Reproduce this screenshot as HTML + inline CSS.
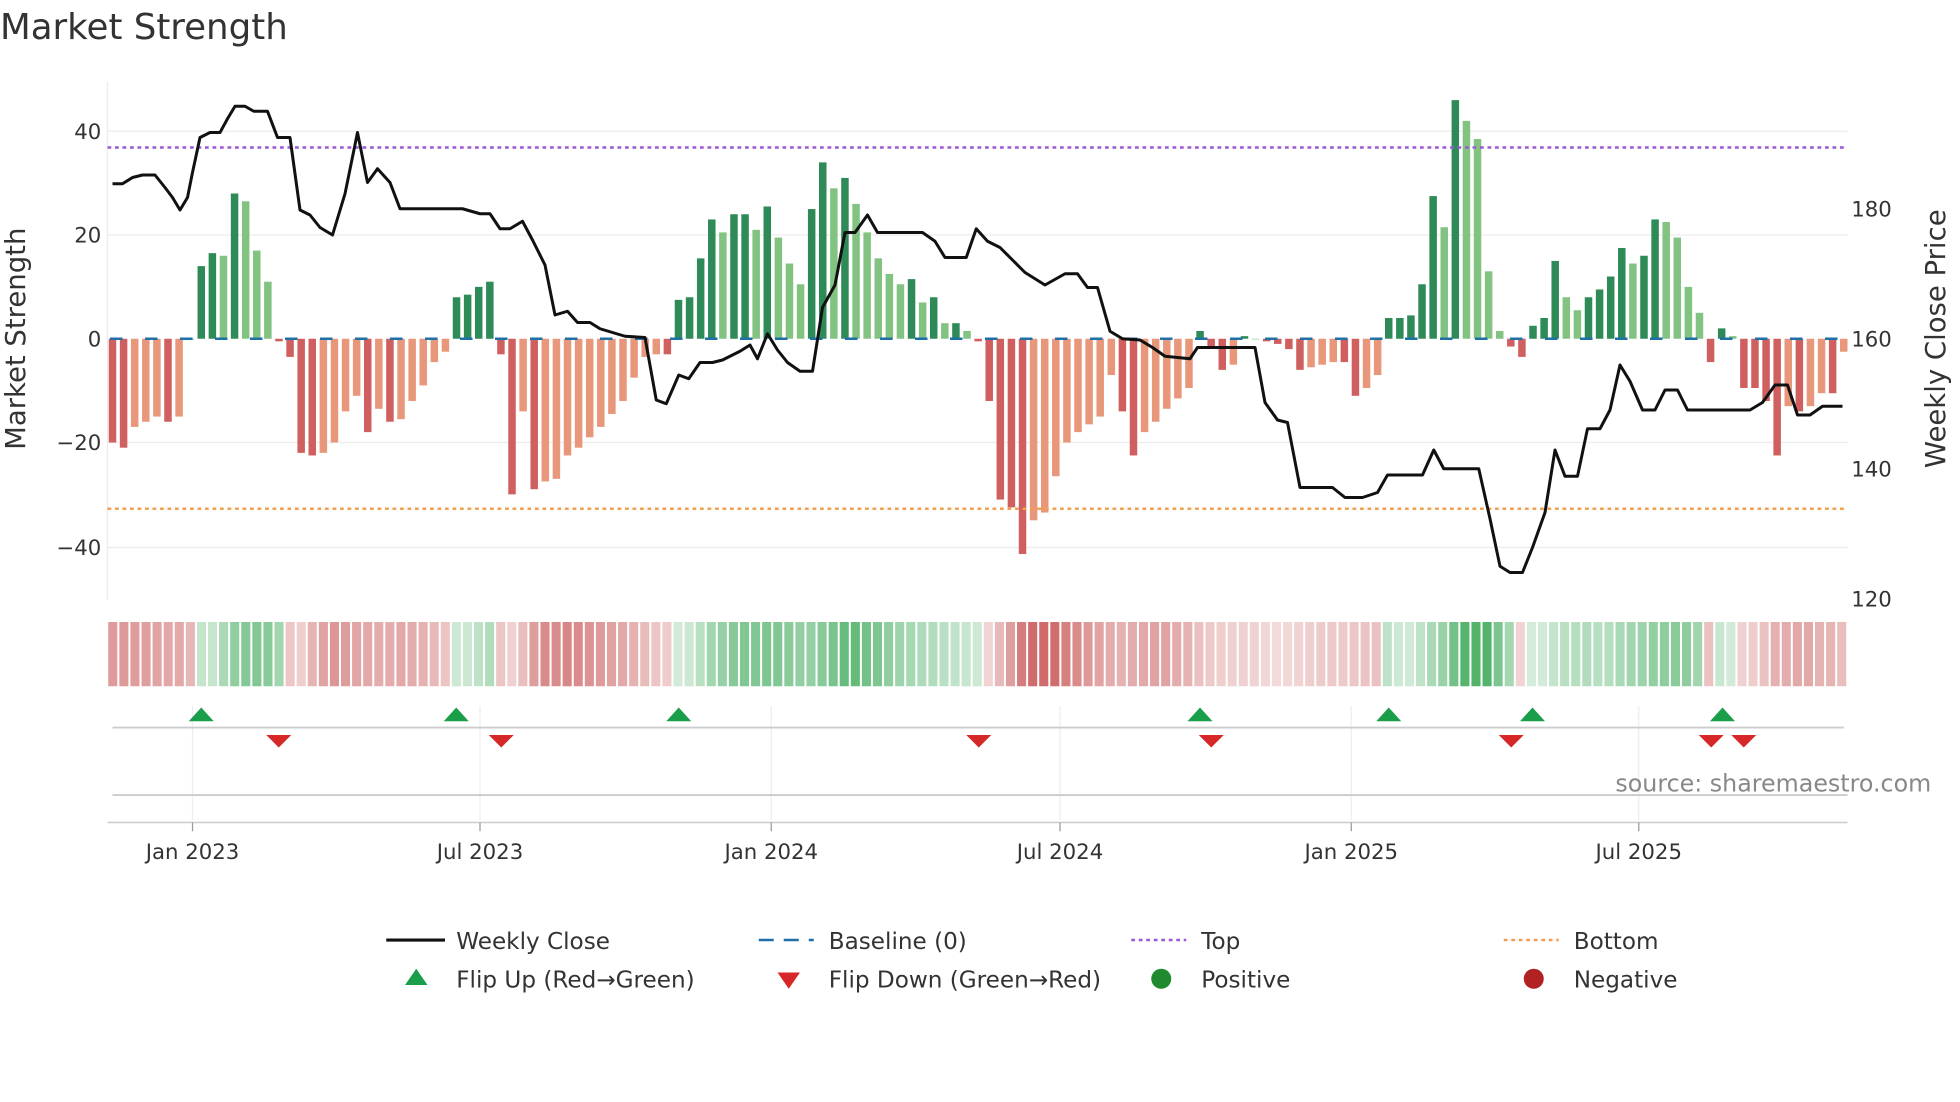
<!DOCTYPE html>
<html><head><meta charset="utf-8"><style>
html,body{margin:0;padding:0;background:#fff;}
svg{display:block;font-family:"DejaVu Sans","Liberation Sans",sans-serif;}
</style></head><body>
<svg id="s" width="1960" height="1102" viewBox="0 0 1568 881.6" xmlns="http://www.w3.org/2000/svg">
<rect width="1568" height="882" fill="#fff"/>
<text x="0" y="31" font-size="28.5" fill="#333">Market Strength</text>
<g id="grid" stroke="#ececec" stroke-width="1">
<line x1="86" x2="1478" y1="105" y2="105"/><line x1="86" x2="1478" y1="188" y2="188"/>
<line x1="86" x2="1478" y1="354" y2="354"/><line x1="86" x2="1478" y1="438" y2="438"/>
<line x1="86" x2="86" y1="65" y2="480"/>
</g>
<g font-size="17" fill="#333" text-anchor="end">
<text x="81" y="111">40</text><text x="81" y="194">20</text><text x="81" y="277">0</text>
<text x="81" y="360">−20</text><text x="81" y="444">−40</text>
</g>
<g font-size="17" fill="#333">
<text x="1481" y="173">180</text><text x="1481" y="277">160</text><text x="1481" y="381">140</text><text x="1481" y="485">120</text>
</g>
<text transform="translate(20,271) rotate(-90)" font-size="22" fill="#333" text-anchor="middle">Market Strength</text>
<text transform="translate(1556,271) rotate(-90)" font-size="22" fill="#333" text-anchor="middle">Weekly Close Price</text>
<g id="bars"></g>
<line x1="86" x2="1478" y1="118" y2="118" stroke="#9b59d6" stroke-width="2" stroke-dasharray="3,3"/>
<line x1="86" x2="1478" y1="407" y2="407" stroke="#f0a050" stroke-width="2" stroke-dasharray="3,3"/>
<line x1="88" x2="1478" y1="271" y2="271" stroke="#1f6fa8" stroke-width="2" stroke-dasharray="10,18"/>
<polyline id="price" fill="none" stroke="#111" stroke-width="2.4" stroke-linejoin="round"/>
<g id="strip"></g>
<g stroke="#eee" stroke-width="1">
<line x1="154" x2="154" y1="565" y2="656"/><line x1="384" x2="384" y1="565" y2="656"/>
<line x1="617" x2="617" y1="565" y2="656"/><line x1="848" x2="848" y1="565" y2="656"/>
<line x1="1081" x2="1081" y1="565" y2="656"/><line x1="1311" x2="1311" y1="565" y2="656"/>
</g>
<line x1="90" x2="1475" y1="582" y2="582" stroke="#ccc" stroke-width="1.5"/>
<line x1="90" x2="1478" y1="636" y2="636" stroke="#ccc" stroke-width="1.5"/>
<g id="marks"></g>
<line x1="86" x2="1478" y1="658" y2="658" stroke="#ccc" stroke-width="1.2"/>
<g stroke="#999" stroke-width="1">
<line x1="154" x2="154" y1="658" y2="665"/><line x1="384" x2="384" y1="658" y2="665"/>
<line x1="617" x2="617" y1="658" y2="665"/><line x1="848" x2="848" y1="658" y2="665"/>
<line x1="1081" x2="1081" y1="658" y2="665"/><line x1="1311" x2="1311" y1="658" y2="665"/>
</g>
<g font-size="17" fill="#333" text-anchor="middle">
<text x="154" y="687">Jan 2023</text><text x="384" y="687">Jul 2023</text><text x="617" y="687">Jan 2024</text>
<text x="848" y="687">Jul 2024</text><text x="1081" y="687">Jan 2025</text><text x="1311" y="687">Jul 2025</text>
</g>
<text x="1545" y="633" font-size="19" fill="#888" text-anchor="end">source: sharemaestro.com</text>
<g font-size="18.5" fill="#333">
<line x1="309" x2="356" y1="752" y2="752" stroke="#111" stroke-width="2.5"/>
<text x="365" y="759">Weekly Close</text>
<line x1="607" x2="651" y1="752" y2="752" stroke="#1f6fa8" stroke-width="2" stroke-dasharray="12,8"/>
<text x="663" y="759">Baseline (0)</text>
<line x1="905" x2="949" y1="752" y2="752" stroke="#9b59d6" stroke-width="2" stroke-dasharray="3,3"/>
<text x="961" y="759">Top</text>
<line x1="1203" x2="1247" y1="752" y2="752" stroke="#f0a050" stroke-width="2" stroke-dasharray="3,3"/>
<text x="1259" y="759">Bottom</text>
<polygon points="324,788 333,775 342,788" fill="#1a9e4a"/>
<text x="365" y="790">Flip Up (Red→Green)</text>
<polygon points="622,778 631,791 640,778" fill="#d62828"/>
<text x="663" y="790">Flip Down (Green→Red)</text>
<circle cx="929" cy="783" r="8" fill="#1f8a2e"/>
<text x="961" y="790">Positive</text>
<circle cx="1227" cy="783" r="8" fill="#b22222"/>
<text x="1259" y="790">Negative</text>
</g>
</svg>
<script>
var NS="http://www.w3.org/2000/svg";
function el(t,a,p){var e=document.createElementNS(NS,t);for(var k in a)e.setAttribute(k,a[k]);document.getElementById(p).appendChild(e);return e;}
var v=[-20,-21,-17,-16,-15,-16,-15,0,14,16.5,16,28,26.5,17,11,-0.5,-3.5,-22,-22.5,-22,-20,-14,-11,-18,-13.5,-16,-15.5,-12,-9,-4.5,-2.5,8,8.5,10,11,-3,-30,-14,-29,-27.5,-27,-22.5,-21,-19,-17,-14.5,-12,-7.5,-3.5,-3,-3,7.5,8,15.5,23,20.5,24,24,21,25.5,19.5,14.5,10.5,25,34,29,31,26,20.5,15.5,12.5,10.5,11.5,7,8,3,3,1.5,-0.5,-12,-31,-32.5,-41.5,-35,-33.5,-26.5,-20,-18,-16.5,-15,-7,-14,-22.5,-18,-16,-13.5,-11.5,-9.5,1.5,-1.5,-6,-5,0.5,0,-0.5,-1,-2,-6,-5.5,-5,-4.5,-4.5,-11,-9.5,-7,4,4,4.5,10.5,27.5,21.5,46,42,38.5,13,1.5,-1.5,-3.5,2.5,4,15,8,5.5,8,9.5,12,17.5,14.5,16,23,22.5,19.5,10,5,-4.5,2,0.5,-9.5,-9.5,-12,-22.5,-13,-14,-13,-10.5,-10.5,-2.5];
var n=v.length,x0=90,x1=1475,step=(x1-x0)/(n-1);
for(var i=0;i<n;i++){
 var x=x0+i*step,val=v[i],pr=i?v[i-1]:0,h=Math.abs(val)*4.15,c;
 if(val>=0)c=(val>=pr)?"#2e8b57":"#82c382";else c=(val<=pr)?"#d06060":"#e8977a";
 el("rect",{x:x-3,y:val>=0?271-h:271,width:6,height:Math.max(h,0.5),fill:c},"bars");
 var s=0,cnt=0;for(var j=Math.max(0,i-3);j<=i;j++){s+=v[j];cnt++;}s/=cnt;
 var sg=v[i]>=0?1:-1; if(Math.abs(v[i])<2&&s!==0) sg=s>=0?1:-1;
 var a=0.2+0.6*Math.min(1,Math.abs(s)/35);
 var col=sg>0?"rgba(40,160,70,"+a+")":"rgba(195,70,70,"+a+")";
 el("rect",{x:86+i*(1392/n)+0.6,y:497.6,width:1392/n-1.6,height:51.4,fill:col},"strip");
}
var p=[[90,147],[98,147],[106,142],[114,140],[124,140],[132,150],[138,158],[144,168],[150,158],[154,138],[160,110],[168,106],[176,106],[182,95],[188,85],[196,85],[203,89],[214,89],[222,110],[232,110],[240,168],[248,172],[256,182],[266,188],[276,155],[286,106],[294,146],[302,135],[312,146],[320,167],[370,167],[384,171],[392,171],[400,183],[408,183],[418,177],[426,192],[436,212],[444,252],[454,249],[462,258],[472,258],[480,263],[490,266],[500,269],[516,270],[525,320],[533,323],[543,300],[551,303],[560,290],[570,290],[578,288],[592,281],[600,276],[606,287],[614,267],[622,280],[630,290],[640,297],[650,297],[658,246],[668,228],[676,186],[684,186],[694,172],[702,186],[738,186],[748,193],[756,206],[773,206],[781,183],[790,193],[800,198],[810,208],[820,218],[836,228],[852,219],[862,219],[870,230],[878,230],[888,265],[898,271],[912,272],[922,278],[932,285],[952,287],[958,278],[1004,278],[1012,322],[1022,336],[1030,338],[1040,390],[1066,390],[1076,398],[1090,398],[1102,394],[1110,380],[1138,380],[1147,360],[1155,375],[1183,375],[1192,415],[1200,453],[1208,458],[1218,458],[1226,438],[1236,410],[1244,360],[1252,381],[1262,381],[1270,343],[1280,343],[1288,328],[1296,292],[1304,305],[1314,328],[1324,328],[1332,312],[1342,312],[1350,328],[1400,328],[1410,322],[1420,308],[1430,308],[1438,332],[1448,332],[1458,325],[1474,325]];
document.getElementById("price").setAttribute("points",p.map(function(q){return q.join(",")}).join(" "));
[161,365,543,960,1111,1226,1378].forEach(function(x){el("polygon",{points:(x-10)+",577 "+x+",566 "+(x+10)+",577",fill:"#1a9e4a"},"marks");});
[223,401,783,969,1209,1369,1395].forEach(function(x){el("polygon",{points:(x-10)+",588 "+x+",598 "+(x+10)+",588",fill:"#d62828"},"marks");});
</script>
</body></html>
